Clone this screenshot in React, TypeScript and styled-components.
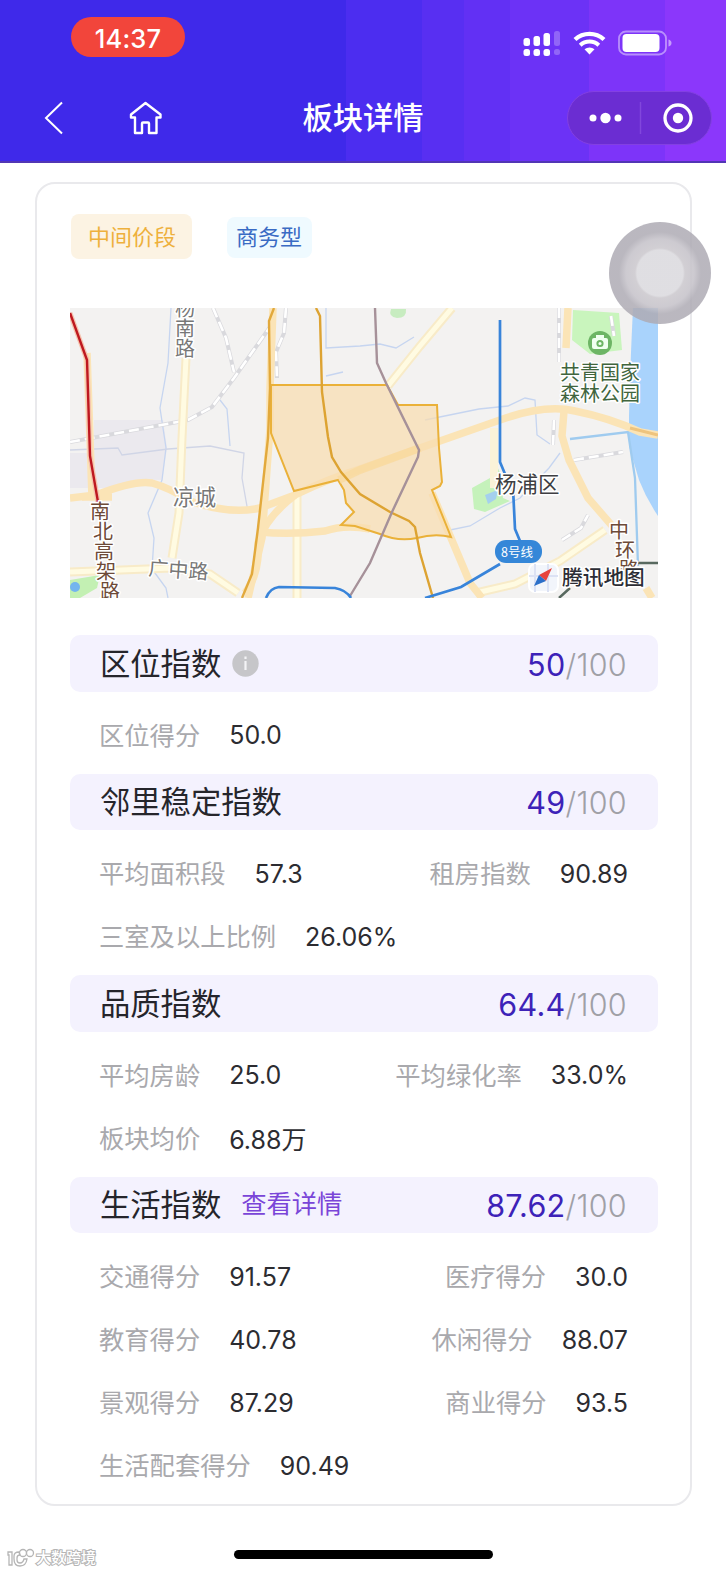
import styled, { createGlobalStyle } from 'styled-components';

const GlobalStyle = createGlobalStyle`
  * {
    box-sizing: border-box;
  }

  body {
    margin: 0;
    background: #fff;
    font-family: Inter, 'Noto Sans CJK SC', sans-serif;
  }
`;

const Page = styled.div`
  position: relative;
  display: flex;
  flex-direction: column;
  width: 726px;
  height: 1572px;
  overflow: hidden;
  background: #fff;
`;

const Header = styled.header`
  height: 163px;
  border-bottom: 2px solid #5136b4;
  background: linear-gradient(
    90deg,
    #3f29ea 346px,
    #4c2df0 346px 422px,
    #582ff2 422px 464px,
    #6230f4 464px 510px,
    #6c32f6 510px 589px,
    #7d34f9 589px 665px,
    #8b37fb 665px
  );
`;

const StatusBar = styled.div`
  display: flex;
  align-items: flex-start;
  justify-content: space-between;
  height: 84px;
  padding: 17px 54px 0 71px;
`;

const TimePill = styled.div`
  display: flex;
  align-items: center;
  justify-content: center;
  width: 114px;
  height: 40px;
  padding-top: 3px;
  border-radius: 20px;
  background: #f2453b;
  color: #fff;
  font-size: 25.5px;
  font-weight: 500;
  letter-spacing: 0.2px;
`;

const StatusIcons = styled.svg`
  margin-top: 11px;
`;

const NavBar = styled.div`
  display: grid;
  grid-template-columns: 1fr auto 1fr;
  align-items: center;
  height: 68px;
  padding: 0 14px 0 43px;
`;

const NavLeft = styled.div`
  display: flex;
  align-items: center;
  gap: 65px;
`;

const NavTitle = styled.h1`
  margin: 0 29px 0 0;
  color: #fff;
  font-size: 30.3px;
  font-weight: 500;
  line-height: 40px;
`;

const Capsule = styled.div`
  display: flex;
  align-items: center;
  justify-self: end;
  width: 145px;
  height: 54px;
  border: 1px solid #8340e2;
  border-radius: 27px;
  background: #6b2dd2;
`;

const Card = styled.main`
  width: 657px;
  height: 1324px;
  margin: 19px 0 0 35px;
  padding: 30px 32px 0 33px;
  border: 2px solid #e9e9ec;
  border-radius: 20px;
`;

const Tags = styled.div`
  display: flex;
  gap: 35px;
  height: 94px;
`;

const Tag = styled.span<{ $tone: 'orange' | 'blue' }>`
  display: flex;
  align-items: center;
  height: ${({ $tone }) => ($tone === 'orange' ? '45px' : '41px')};
  margin-top: ${({ $tone }) => ($tone === 'orange' ? '0' : '3px')};
  padding: ${({ $tone }) => ($tone === 'orange' ? '0 16px 4px 17px' : '0 10px 5px 9px')};
  margin-left: ${({ $tone }) => ($tone === 'orange' ? '1px' : '0')};
  border-radius: 8px;
  background: ${({ $tone }) => ($tone === 'orange' ? '#fcf3e3' : '#effaff')};
  color: ${({ $tone }) => ($tone === 'orange' ? '#eeb03c' : '#3a6bc4')};
  font-size: 22px;
`;

const MapImage = styled.svg`
  display: block;
  width: 588px;
  height: 290px;
  margin-bottom: 37px;
`;

const Section = styled.section`
  width: 588px;
  padding-bottom: 6px;
`;

const SectionBar = styled.div`
  display: flex;
  align-items: center;
  height: 56.5px;
  margin-bottom: 12px;
  padding: 0 31px 0 30px;
  border-radius: 10px;
  background: #f4f2fe;
`;

const SectionTitle = styled.h2`
  margin: 1px 0 0;
  color: #25252b;
  font-size: 30.3px;
  font-weight: 400;
  line-height: 40px;
`;

const InfoIcon = styled.svg`
  margin-left: 11px;
`;

const DetailLink = styled.a`
  margin: -5px 0 0 20px;
  color: #7a45d8;
  font-size: 25.3px;
`;

const Score = styled.div`
  margin: 2px 0 0 auto;
  color: #a0a0a6;
  font-size: 30.5px;
  font-weight: 300;
  letter-spacing: 0.3px;

  strong {
    color: #3d22b8;
    font-weight: 400;
  }
`;

const Rows = styled.div`
  display: flex;
  flex-wrap: wrap;
  justify-content: space-between;
  padding: 0 30px 1px 29px;
`;

const Metric = styled.div`
  display: flex;
  align-items: center;
  gap: 29px;
  height: 63px;
`;

const MetricLabel = styled.span`
  margin-top: -3px;
  color: #a9a9ad;
  font-size: 25.3px;
`;

const MetricValue = styled.span`
  color: #2c2c31;
  font-size: 25px;
`;

const AssistiveTouch = styled.div`
  position: absolute;
  top: 222px;
  left: 609px;
  width: 102px;
  height: 102px;
  border-radius: 50%;
  background: radial-gradient(
    circle,
    rgba(222, 221, 225, 0.96) 23px,
    rgba(206, 203, 208, 0.92) 25px,
    rgba(198, 195, 202, 0.88) 34px,
    rgba(174, 171, 180, 0.85) 41px
  );
`;

const HomeIndicator = styled.div`
  position: absolute;
  bottom: 13px;
  left: 234px;
  width: 259px;
  height: 9px;
  border-radius: 5px;
  background: #000;
`;

const Watermark = styled.div`
  position: absolute;
  bottom: 3px;
  left: 7px;
  display: flex;
  align-items: center;
  gap: 1px;
  color: #fff;
  font-size: 15px;
  font-weight: 500;
  line-height: 22px;
  -webkit-text-stroke: 2px #b5b5b5;
  paint-order: stroke fill;
`;

interface MetricItem {
  label: string;
  value: string;
}

interface IndexSection {
  title: string;
  score: string;
  info?: boolean;
  link?: string;
  metrics: MetricItem[];
}

const sections: IndexSection[] = [
  {
    title: '区位指数',
    score: '50',
    info: true,
    metrics: [{ label: '区位得分', value: '50.0' }],
  },
  {
    title: '邻里稳定指数',
    score: '49',
    metrics: [
      { label: '平均面积段', value: '57.3' },
      { label: '租房指数', value: '90.89' },
      { label: '三室及以上比例', value: '26.06%' },
    ],
  },
  {
    title: '品质指数',
    score: '64.4',
    metrics: [
      { label: '平均房龄', value: '25.0' },
      { label: '平均绿化率', value: '33.0%' },
      { label: '板块均价', value: '6.88万' },
    ],
  },
  {
    title: '生活指数',
    score: '87.62',
    link: '查看详情',
    metrics: [
      { label: '交通得分', value: '91.57' },
      { label: '医疗得分', value: '30.0' },
      { label: '教育得分', value: '40.78' },
      { label: '休闲得分', value: '88.07' },
      { label: '景观得分', value: '87.29' },
      { label: '商业得分', value: '93.5' },
      { label: '生活配套得分', value: '90.49' },
    ],
  },
];

const StatusGlyphs = () => (
  <StatusIcons width="150" height="30" viewBox="0 0 150 30" fill="#fff">
    {/* signal */}
    <rect x="1.5" y="10" width="6.5" height="8" rx="2.5" />
    <rect x="11.5" y="8" width="6.5" height="10" rx="2.5" />
    <rect x="21.5" y="5" width="6.5" height="13" rx="2.5" />
    <rect x="32" y="3" width="6" height="15" rx="2.5" opacity="0.25" />
    <rect x="1.5" y="21" width="6.5" height="7" rx="2.5" />
    <rect x="11.5" y="21" width="6.5" height="7" rx="2.5" />
    <rect x="21.5" y="21" width="6.5" height="7" rx="2.5" />
    <rect x="32" y="21" width="6" height="6" rx="2.5" opacity="0.25" />
    {/* wifi */}
    <path d="M67.5 26.5l-5-5.2a7.5 7.5 0 0 1 10 0z" />
    <path d="M53 11.5a21.5 21.5 0 0 1 29 0" fill="none" stroke="#fff" strokeWidth="4.4" />
    <path d="M58.2 17.2a13.6 13.6 0 0 1 18.6 0" fill="none" stroke="#fff" strokeWidth="4" />
    {/* battery */}
    <rect x="97" y="3.5" width="47" height="23" rx="7" fill="none" stroke="#fff" strokeOpacity="0.45" strokeWidth="1.8" />
    <rect x="100.5" y="6" width="37" height="18" rx="4" />
    <path d="M146.5 11.5q3 1 3 3.5t-3 3.5z" opacity="0.5" />
  </StatusIcons>
);

const DistrictMap = () => (
  <MapImage viewBox="0 0 588 290" fill="none" fontFamily="'Noto Sans CJK SC', sans-serif">
    <rect width="588" height="290" fill="#f3f2f1" />
    <path d="M24 112H93L97 140L92 172Q66 170 38 180H0V145H24z" fill="#ebe9ee" />

    {/* river, parks and canals */}
    <path d="M563 0H588V208Q576 190 569 172L559 138V108Q560 60 563 0z" fill="#a9d3fc" />
    <path d="M503 2L549 5L552 42L520 46L502 32z" fill="#c9f5bd" />
    <path d="M402 180L420 170L427 158L430 165L433 190L440 193L415 204L404 201z" fill="#c5f2bb" />
    <path d="M430 171L425 183L415 187L418 196L426 191z" fill="#a4d0ee" />
    <path d="M0 272L30 267L27 280L10 290H0z" fill="#c3f0b3" />
    <circle cx="5" cy="279" r="5" fill="#73b5ee" />
    <path d="M321 1h15q1 9-9 9q-9-1-6-9z" fill="#c7ecc0" />
    <g stroke="#c6d5f0" strokeWidth="1.3">
      <path d="M101 0L98 55L90 100L96 140L92 172L78 205L84 230L82 261L96 280L98 290" />
      <path d="M0 142L48 140L52 147L98 141L140 138L174 145L172 170L178 204" stroke="#d0d5e6" />
      <path d="M150 92L157 101L160 138" />
      <path d="M256 0V40L290 38L310 36L326 40L344 29M256 68L273 64" />
      <path d="M355 112L409 101L438 98L455 90L465 92L467 127L480 136" />
      <path d="M380 222L400 218L430 200L450 190L479 160L490 145" />
      <path d="M500 131L558 124L565 170L568 258" strokeWidth="2.3" stroke="#9fcbef" />
    </g>

    {/* railways */}
    <g strokeWidth="4" stroke="#d9d9dd">
      <path d="M0 134L75 120L118 112L142 99L164 70L200 19M143 0L156 30L164 64" />
      <path d="M216 0L214 25L206 44L207 70M489 0V54M541 8L544 28M484 112L483 137M504 152L553 144M492 232L511 220L518 207" />
    </g>
    <g strokeWidth="2.6" stroke="#fff" strokeDasharray="10 5">
      <path d="M0 134L75 120L118 112L142 99L164 70L200 19M143 0L156 30L164 64" />
      <path d="M216 0L214 25L206 44L207 70M489 0V54M541 8L544 28M484 112L483 137M504 152L553 144M492 232L511 220L518 207" />
    </g>

    {/* minor roads */}
    <g stroke="#f8ebc8" strokeWidth="9">
      <path d="M116 50L112 130L109 205L102 250M0 264L102 260L140 266L168 285M227 185V290M318 78L350 38L382 0" />
      <path d="M406 285L445 276L490 253L535 222" />
    </g>
    <path d="M424 180V120" stroke="#faf2d8" strokeWidth="8" />
    <g stroke="#fffbe2" strokeWidth="5">
      <path d="M116 50L112 130L109 205L102 250M0 264L102 260L140 266L168 285M227 185V290M318 78L350 38L382 0" />
      <path d="M406 285L445 276L490 253L535 222" />
    </g>

    {/* main roads */}
    <g stroke="#fbe4b6" strokeWidth="7.5" strokeLinejoin="round">
      <path d="M0 190L26 187Q65 172 82 175Q100 180 120 193Q160 207 190 200L225 187Q260 170 290 161L430 112Q475 96 505 103Q540 110 570 124L588 127" />
      <path d="M17 45L20 130L22 190M12 189H42M175 285Q190 265 188 235Q195 210 225 187M190 224Q220 227 255 223Q275 216 300 221" />
      <path d="M498 0L496 40M494 103L492 128L499 152L518 190L544 220M362 185L400 275L412 290M576 280L582 290" />
      <path d="M203 0L200 80V120L192 230L178 290" />
    </g>
    <path d="M560 120L588 127" stroke="#eec47e" strokeWidth="3" />

    {/* district outline */}
    <path
      d="M201 77H317L328 97H367L369 140L372 174L370 178L362 182L381 229Q365 225 347 230Q328 234 310 226L285 218L271 217L284 204L276 195L274 182L268 172L224 183L201 125z"
      fill="#f8ddb0"
      fillOpacity="0.72"
      stroke="#eab139"
      strokeWidth="2"
    />
    <path d="M269 172L290 162L350 140" stroke="#f9da9d" strokeWidth="8" opacity="0.8" />

    {/* metro lines */}
    <path d="M204 0L199 13L200 80L198 130L188 220L182 266L172 290" stroke="#e2a93c" strokeWidth="2.4" />
    <path d="M246 0L250 8L252 84L258 129L262 149L271 164L290 186L320 204L339 213L345 219L350 245L363 290" stroke="#dda332" strokeWidth="2.4" />
    <path d="M305 0L307 55L316 75L349 142L348 149L322 204L300 255L280 288" stroke="#a69199" strokeWidth="2.4" />
    <path d="M0 5L17 52L20 148L28 194" stroke="#f5c3ae" strokeWidth="5" />
    <path d="M0 5L17 52L20 148L28 194" stroke="#be1820" strokeWidth="2.4" />
    <path d="M430 12V154L435 166L443 180L445 221L450 233" stroke="#3884da" strokeWidth="2.7" />
    <path d="M430 256L391 279L355 290M196 290Q200 280 209 279L265 280Q276 282 281 290" stroke="#3884da" strokeWidth="2.7" />
    <path d="M568 255H588M489 290L500 280" stroke="#58695f" strokeWidth="2.5" />

    {/* park pin */}
    <circle cx="530" cy="35" r="12" fill="#6db565" />
    <rect x="522" y="30" width="16" height="11" rx="2" fill="#f0fff0" />
    <path d="M526 30v-3h8v3z" fill="#f0fff0" />
    <circle cx="530" cy="35.5" r="2.6" stroke="#6db565" strokeWidth="2" />

    <g stroke="#fff" strokeWidth="3" paintOrder="stroke" strokeLinejoin="round" fontSize="20">
      <g fill="#777">
        <text x="105" y="8">杨</text>
        <text x="105" y="28">南</text>
        <text x="105" y="48">路</text>
        <text x="103" y="197" fontSize="21.5">凉城</text>
        <text x="78" y="267" transform="rotate(4 78 267)">广中路</text>
      </g>
      <g fill="#6d4a38">
        <text x="20" y="211">南</text>
        <text x="23" y="231">北</text>
        <text x="24" y="251">高</text>
        <text x="26" y="271">架</text>
        <text x="30" y="291">路</text>
        <text x="539" y="230">中</text>
        <text x="545" y="250">环</text>
        <text x="549" y="269">路</text>
      </g>
      <g fill="#40653d">
        <text x="490" y="72">共青国家</text>
        <text x="490" y="93">森林公园</text>
      </g>
      <text x="425" y="184" fontSize="21.5" fill="#3f3f43">杨浦区</text>
    </g>

    <rect x="425" y="232" width="47" height="23" rx="11" fill="#3587d8" />
    <text x="431" y="249" fontSize="12.5" fill="#fff">8号线</text>

    {/* map provider */}
    <rect x="459" y="256" width="29" height="28" rx="6" fill="#f2f5fb" stroke="#fff" strokeWidth="2" />
    <path d="M465 256v28M478 256v28M459 268h29" stroke="#dce2f4" strokeWidth="2" />
    <path d="M482 260L469 267L476 273z" fill="#e8443d" />
    <path d="M464 278L469 267L476 273z" fill="#2b6fc9" />
    <text x="492" y="277" fontSize="20.7" fontWeight="500" fill="#2c2d35" stroke="#fff" strokeWidth="3" paintOrder="stroke">
      腾讯地图
    </text>
  </MapImage>
);

export default function App() {
  return (
    <>
      <GlobalStyle />
      <Page>
        <Header>
          <StatusBar>
            <TimePill>14:37</TimePill>
            <StatusGlyphs />
          </StatusBar>
          <NavBar>
            <NavLeft>
              <svg width="21" height="34" viewBox="0 0 21 34" fill="none" stroke="#fff" strokeWidth="2">
                <path d="M19 1.5L3 17L19 32.5" />
              </svg>
              <svg width="34" height="34" viewBox="0 0 34 34" fill="none" stroke="#fff" strokeWidth="2.4" strokeLinejoin="round">
                <path d="M16.5 2L2 13.5V16.5H6V32H13V22.5Q13 21.5 14 21.5H19Q20 21.5 20 22.5V32H27.5V16.5H31.5V13.5z" />
              </svg>
            </NavLeft>
            <NavTitle>板块详情</NavTitle>
            <Capsule>
              <svg width="143" height="52" viewBox="0 0 143 52" fill="#fff">
                <circle cx="25" cy="26" r="3.5" />
                <circle cx="37.5" cy="26" r="5.2" />
                <circle cx="50" cy="26" r="3.5" />
                <path d="M72.5 10v32" stroke="#8147dc" strokeWidth="1.5" />
                <circle cx="110" cy="26" r="13" fill="none" stroke="#fff" strokeWidth="3.3" />
                <circle cx="110" cy="26" r="5.2" />
              </svg>
            </Capsule>
          </NavBar>
        </Header>

        <Card>
          <Tags>
            <Tag $tone="orange">中间价段</Tag>
            <Tag $tone="blue">商务型</Tag>
          </Tags>
          <DistrictMap />
          {sections.map((section) => (
            <Section key={section.title}>
              <SectionBar>
                <SectionTitle>{section.title}</SectionTitle>
                {section.info && (
                  <InfoIcon width="27" height="27" viewBox="0 0 27 27">
                    <circle cx="13.5" cy="13.5" r="13.2" fill="#c6c6c9" />
                    <path d="M13.5 11v9M13.5 6.5v2.5" stroke="#f4f4f6" strokeWidth="2.2" />
                  </InfoIcon>
                )}
                {section.link && <DetailLink>{section.link}</DetailLink>}
                <Score>
                  <strong>{section.score}</strong>/100
                </Score>
              </SectionBar>
              <Rows>
                {section.metrics.map((metric) => (
                  <Metric key={metric.label}>
                    <MetricLabel>{metric.label}</MetricLabel>
                    <MetricValue>{metric.value}</MetricValue>
                  </Metric>
                ))}
              </Rows>
            </Section>
          ))}
        </Card>

        <AssistiveTouch />
        <HomeIndicator />
        <Watermark>
          <svg width="28" height="20" viewBox="0 0 28 20" fill="none" stroke="#b5b5b5" strokeWidth="1.3">
            <path d="M1 4h4v13H2V7H1zM7 8q0-4 5-4l1 3q-3 0-3 3v2q0 3 3 3t4-4h3q-1 7-7 7t-6-7z" />
            <circle cx="16" cy="5" r="3.5" />
            <circle cx="23" cy="5" r="3.5" />
          </svg>
          大数跨境
        </Watermark>
      </Page>
    </>
  );
}
